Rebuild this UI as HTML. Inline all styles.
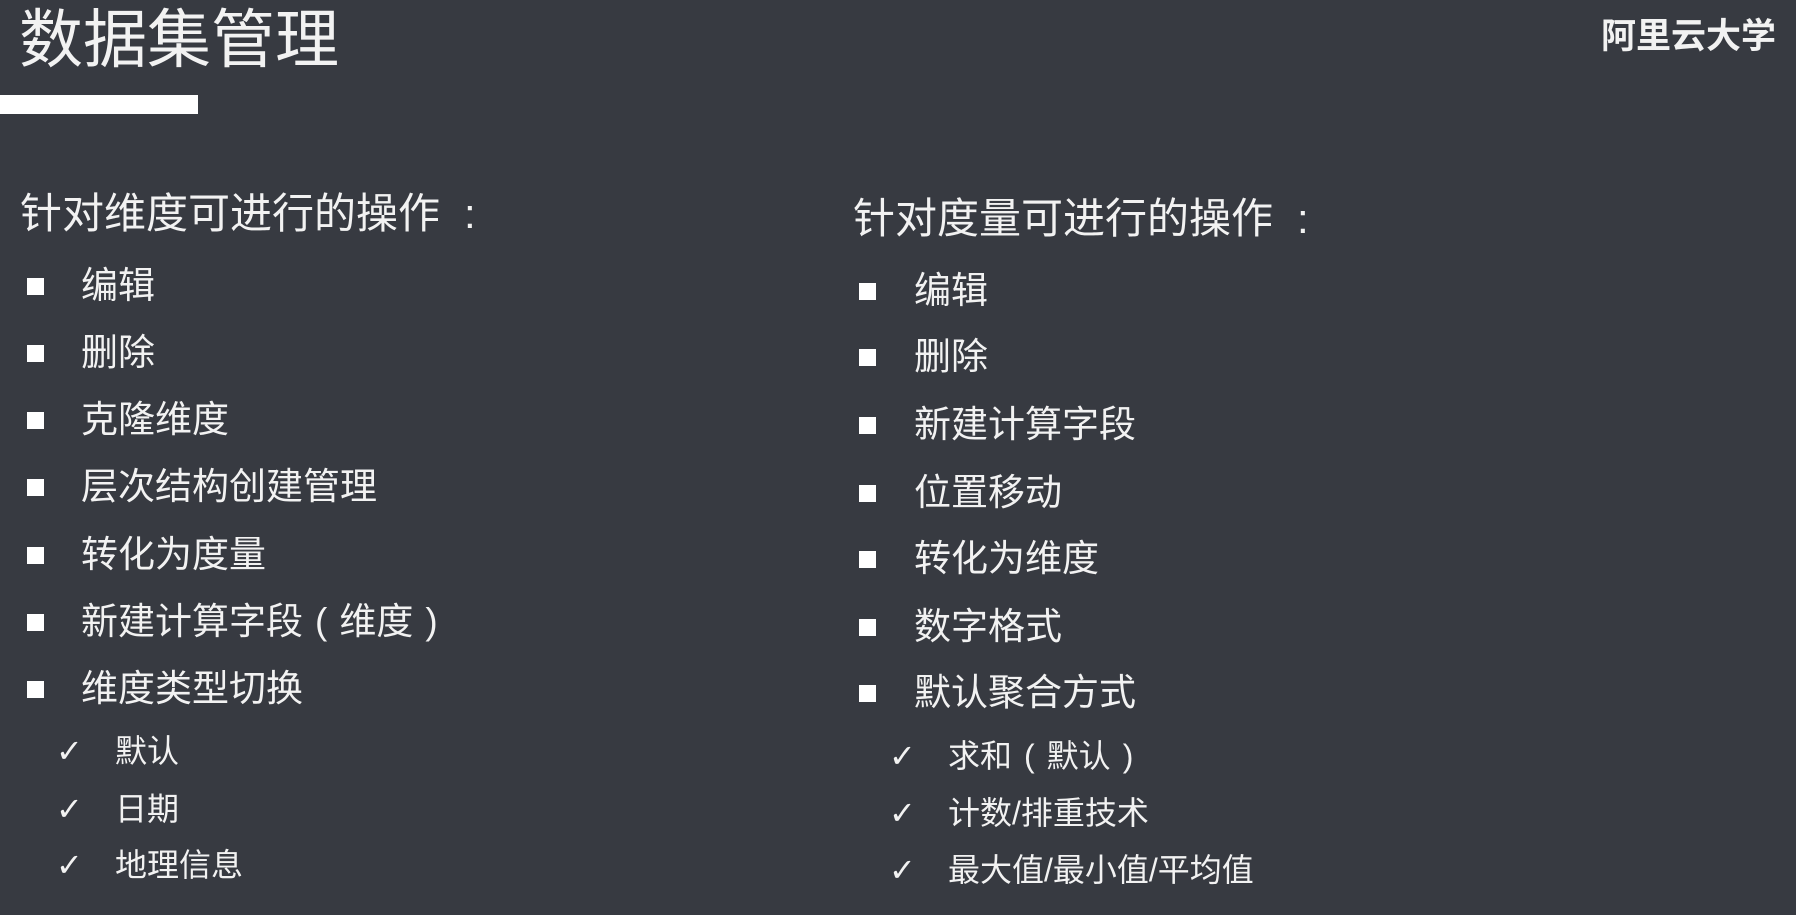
<!DOCTYPE html>
<html><head><meta charset="utf-8"><style>
body{margin:0;width:1796px;height:915px;background:#373a41;overflow:hidden;position:relative;font-family:"Liberation Sans","Noto Sans CJK SC",sans-serif;color:#f2f2f2}
div{position:absolute;white-space:nowrap}
.t{font-size:64px;line-height:64px;left:19px;top:8px}
.brand{font-size:35px;line-height:36px;left:1601px;top:19px;font-weight:bold}
.bar{left:0;top:95px;width:198px;height:19px;background:#fff}
.h{font-size:42px;line-height:40px}
.i{font-size:37px;line-height:36px}
.s{font-size:32px;line-height:32px}
.b{width:17px;height:17px;background:#fff}
.c{font-size:32px;line-height:26px;font-weight:bold;font-family:"DejaVu Sans",sans-serif}
.p{display:inline-block;margin:0 12px}
.q{display:inline-block;margin-left:24px}
</style></head><body>
<div class="t">数据集管理</div>
<div class="brand">阿里云大学</div>
<div class="bar"></div>

<div class="h" style="left:20px;top:194px">针对维度可进行的操作<span class="q">:</span></div>
<div class="b" style="left:27px;top:278px"></div><div class="i" style="left:81px;top:268px">编辑</div>
<div class="b" style="left:27px;top:345px"></div><div class="i" style="left:81px;top:335px">删除</div>
<div class="b" style="left:27px;top:412px"></div><div class="i" style="left:81px;top:402px">克隆维度</div>
<div class="b" style="left:27px;top:479px"></div><div class="i" style="left:81px;top:469px">层次结构创建管理</div>
<div class="b" style="left:27px;top:547px"></div><div class="i" style="left:81px;top:537px">转化为度量</div>
<div class="b" style="left:27px;top:614px"></div><div class="i" style="left:81px;top:604px">新建计算字段<span class="p">(</span>维度<span class="p">)</span></div>
<div class="b" style="left:27px;top:681px"></div><div class="i" style="left:81px;top:671px">维度类型切换</div>
<div class="c" style="left:56px;top:738px">✓</div><div class="s" style="left:115px;top:735px">默认</div>
<div class="c" style="left:56px;top:796px">✓</div><div class="s" style="left:115px;top:793px">日期</div>
<div class="c" style="left:56px;top:852px">✓</div><div class="s" style="left:115px;top:849px">地理信息</div>

<div class="h" style="left:853px;top:199px">针对度量可进行的操作<span class="q">:</span></div>
<div class="b" style="left:859px;top:283px"></div><div class="i" style="left:914px;top:273px">编辑</div>
<div class="b" style="left:859px;top:349px"></div><div class="i" style="left:914px;top:339px">删除</div>
<div class="b" style="left:859px;top:417px"></div><div class="i" style="left:914px;top:407px">新建计算字段</div>
<div class="b" style="left:859px;top:485px"></div><div class="i" style="left:914px;top:475px">位置移动</div>
<div class="b" style="left:859px;top:551px"></div><div class="i" style="left:914px;top:541px">转化为维度</div>
<div class="b" style="left:859px;top:619px"></div><div class="i" style="left:914px;top:609px">数字格式</div>
<div class="b" style="left:859px;top:685px"></div><div class="i" style="left:914px;top:675px">默认聚合方式</div>
<div class="c" style="left:889px;top:743px">✓</div><div class="s" style="left:948px;top:740px">求和<span class="p">(</span>默认<span class="p">)</span></div>
<div class="c" style="left:889px;top:800px">✓</div><div class="s" style="left:948px;top:797px">计数/排重技术</div>
<div class="c" style="left:889px;top:857px">✓</div><div class="s" style="left:948px;top:854px">最大值/最小值/平均值</div>
</body></html>
